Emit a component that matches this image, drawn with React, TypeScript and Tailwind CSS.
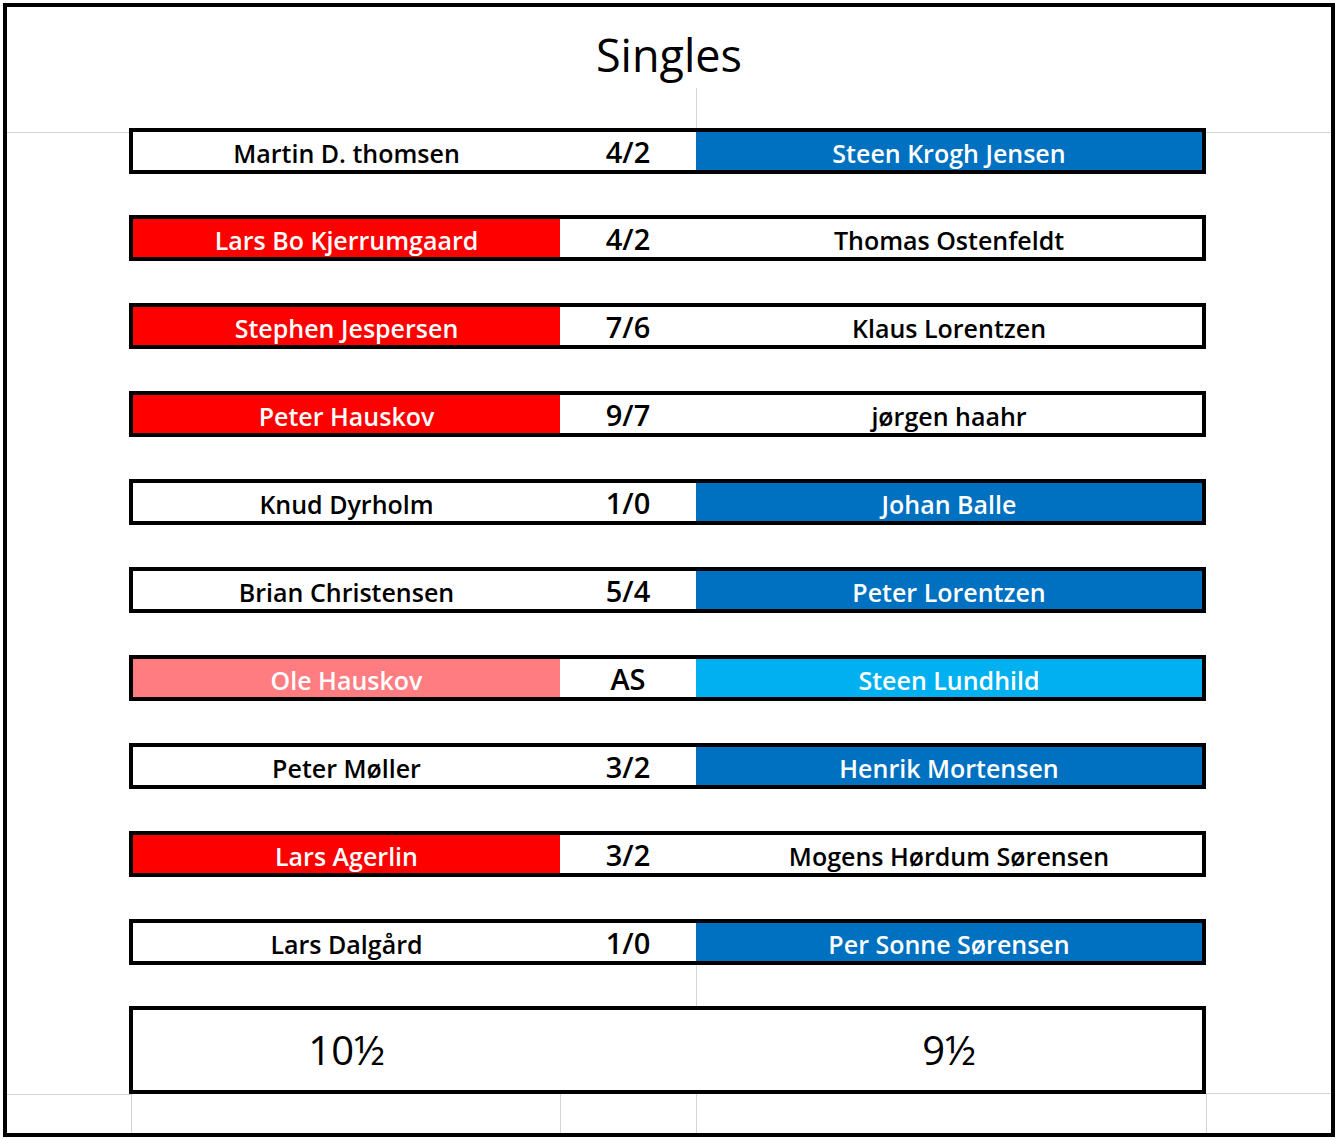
import React from 'react';

type Fill = 'white' | 'red' | 'pink' | 'blue' | 'sky';

const fills: Record<Fill, string> = {
  white: 'bg-white text-black',
  red: 'bg-[#ff0000] text-white',
  pink: 'bg-[#ff7c80] text-white',
  blue: 'bg-[#0070c0] text-white',
  sky: 'bg-[#00b0f0] text-white',
};

const matches: { left: string; score: string; right: string; lf: Fill; rf: Fill; gap: string }[] = [
  { left: 'Martin D. thomsen', score: '4/2', right: 'Steen Krogh Jensen', lf: 'white', rf: 'blue', gap: 'mt-0' },
  { left: 'Lars Bo Kjerrumgaard', score: '4/2', right: 'Thomas Ostenfeldt', lf: 'red', rf: 'white', gap: 'mt-[41px]' },
  { left: 'Stephen Jespersen', score: '7/6', right: 'Klaus Lorentzen', lf: 'red', rf: 'white', gap: 'mt-[42px]' },
  { left: 'Peter Hauskov', score: '9/7', right: 'jørgen haahr', lf: 'red', rf: 'white', gap: 'mt-[42px]' },
  { left: 'Knud Dyrholm', score: '1/0', right: 'Johan Balle', lf: 'white', rf: 'blue', gap: 'mt-[42px]' },
  { left: 'Brian Christensen', score: '5/4', right: 'Peter Lorentzen', lf: 'white', rf: 'blue', gap: 'mt-[42px]' },
  { left: 'Ole Hauskov', score: 'AS', right: 'Steen Lundhild', lf: 'pink', rf: 'sky', gap: 'mt-[42px]' },
  { left: 'Peter Møller', score: '3/2', right: 'Henrik Mortensen', lf: 'white', rf: 'blue', gap: 'mt-[42px]' },
  { left: 'Lars Agerlin', score: '3/2', right: 'Mogens Hørdum Sørensen', lf: 'red', rf: 'white', gap: 'mt-[42px]' },
  { left: 'Lars Dalgård', score: '1/0', right: 'Per Sonne Sørensen', lf: 'white', rf: 'blue', gap: 'mt-[42px]' },
];

function MatchRow({ m, first }: { m: (typeof matches)[number]; first: boolean }) {
  return (
    <div className={`flex h-[46px] shrink-0 ${m.gap}`}>
      <div className="w-[122px] shrink-0">
        {first && <div className="mt-[4px] h-px bg-[#d4d4d4]" />}
      </div>
      <div className="grid h-[46px] w-[1077px] shrink-0 grid-cols-[427px_136px_506px] grid-rows-[38px] overflow-hidden border-4 border-black leading-none">
        <div className={`flex items-center justify-center pt-[4px] text-[25px] font-semibold ${fills[m.lf]}`}>
          {m.left}
        </div>
        <div className="flex items-center justify-center bg-white pt-[1px] text-[29px] font-semibold text-black">
          {m.score}
        </div>
        <div className={`flex items-center justify-center pt-[4px] text-[25px] font-semibold ${fills[m.rf]}`}>
          {m.right}
        </div>
      </div>
      <div className="flex-1">
        {first && <div className="mt-[4px] h-px bg-[#d4d4d4]" />}
      </div>
    </div>
  );
}

export default function App() {
  return (
    <div className="min-h-[1139px] bg-white pl-[3px] pt-[3px] font-['Open_Sans',sans-serif]">
      <div className="flex h-[1134px] w-[1332px] flex-col border-4 border-black">
        <div className="h-[121px] shrink-0">
          <div className="h-[81px] pt-[25px] text-center text-[45px] leading-[45px] text-black">Singles</div>
          <div className="ml-[689px] h-[40px] border-l border-[#d4d4d4]" />
        </div>

        {matches.map((m, i) => (
          <MatchRow key={m.left} m={m} first={i === 0} />
        ))}

        <div className="ml-[689px] h-[41px] shrink-0 border-l border-[#d4d4d4]" />

        <div className="flex h-[88px] shrink-0">
          <div className="w-[122px] shrink-0" />
          <div className="grid w-[1077px] shrink-0 grid-cols-[427px_136px_506px] border-4 border-black text-[40px] leading-none text-black">
            <div className="flex items-center justify-center">10½</div>
            <div />
            <div className="flex items-center justify-center">9½</div>
          </div>
          <div className="flex-1" />
        </div>

        <div className="grid h-[39px] shrink-0 grid-cols-[124px_429px_136px_510px_1fr]">
          <div className="border-t border-[#d4d4d4]" />
          <div className="border-l border-[#d4d4d4]" />
          <div className="border-l border-[#d4d4d4]" />
          <div className="border-l border-[#d4d4d4]" />
          <div className="-mt-px border-l border-t border-[#d4d4d4]" />
        </div>
      </div>
    </div>
  );
}
